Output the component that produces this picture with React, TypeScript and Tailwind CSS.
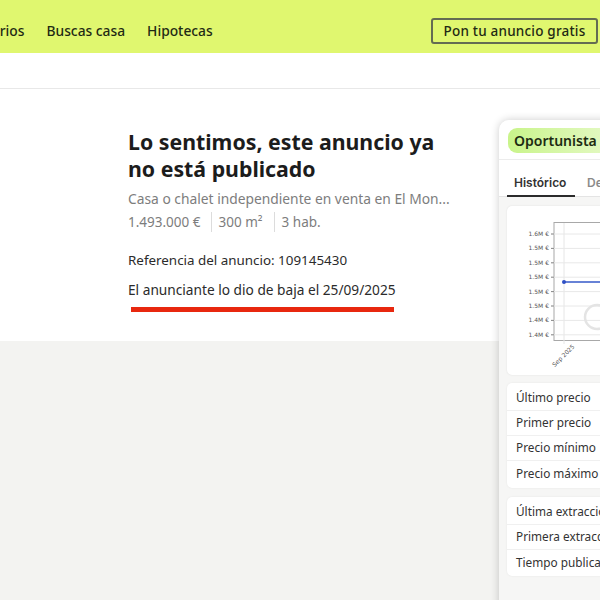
const ticks = ["1.6M €", "1.5M €", "1.5M €", "1.5M €", "1.5M €", "1.5M €", "1.4M €", "1.4M €"];

const PriceChart = () => (
  <svg width="93" height="169" viewBox="507 206 93 169" className="block">
    <rect x="554" y="222.5" width="60" height="118" fill="none" stroke="#a8a8a8" strokeWidth="1" />
    <line x1="564" y1="223" x2="564" y2="344" stroke="#e6e6e6" strokeWidth="1" />
    {ticks.map((t, i) => {
      const y = 234 + i * 14.4;
      return (
        <g key={i}>
          <line x1="551" y1={y} x2="600" y2={y} stroke="#e8e8e8" strokeWidth="1" />
          <line x1="551" y1={y} x2="554" y2={y} stroke="#888" strokeWidth="1" />
          <text x="549" y={y + 2} textAnchor="end" fontSize="6" fill="#555" fontFamily="'DejaVu Sans', sans-serif">
            {t}
          </text>
        </g>
      );
    })}
    <circle cx="597" cy="317" r="12" fill="none" stroke="#e4e4e4" strokeWidth="2.5" />
    <line x1="564" y1="282" x2="600" y2="282" stroke="#3558c8" strokeWidth="1.5" />
    <circle cx="564" cy="282" r="2" fill="#2f4fc4" />
    <text
      x="575"
      y="347"
      textAnchor="end"
      fontSize="6"
      fill="#555"
      fontFamily="'DejaVu Sans', sans-serif"
      transform="rotate(-45 575 347)"
    >
      Sep 2025
    </text>
  </svg>
);

const Row = ({ label, last }: { label: string; last?: boolean }) => (
  <div className={`h-[25px] pl-[9px] flex items-center text-[11.8px] text-[#333] whitespace-nowrap ${last ? "" : "border-b border-[#f0f0f0]"}`}>
    {label}
  </div>
);

const App = () => {
  return (
    <div className="relative w-[600px] h-[600px] overflow-hidden bg-[#f3f3f1] font-['Noto_Sans',sans-serif]">
      <header className="h-[53px] pt-[9px] bg-[#e0f76f] flex items-center text-[#1f2a14] font-medium">
        <nav className="flex gap-[22px] ml-[-56px] text-[13.8px]">
          <span>Propietarios</span>
          <span>Buscas casa</span>
          <span>Hipotecas</span>
        </nav>
        <button className="absolute left-[431px] top-[18px] w-[167px] h-[26px] border-2 border-[#646c52] rounded-[3px] text-[13.5px] tracking-[0.2px] text-center">
          Pon tu anuncio gratis
        </button>
      </header>
      <div className="h-[36px] bg-white border-b border-[#e8e8e8]"></div>
      <main className="h-[252px] bg-white pl-[128px] pt-[39px]">
        <h1 className="w-[330px] text-[21.3px] leading-[27px] font-bold text-[#1c1c1c]">
          Lo sentimos, este anuncio ya no está publicado
        </h1>
        <p className="mt-[7px] text-[13.8px] leading-[20px] text-[#7d7d7d] whitespace-nowrap">
          Casa o chalet independiente en venta en El Mon...
        </p>
        <div className="mt-[3px] flex items-center text-[13.5px] leading-[20px] text-[#7d7d7d]">
          <span className="pr-[10px] border-r border-[#dcdcdc]">1.493.000 €</span>
          <span className="pl-[7px] pr-[11px] border-r border-[#dcdcdc]">300 m²</span>
          <span className="pl-[7px]">3 hab.</span>
        </div>
        <p className="mt-[18px] text-[13.4px] leading-[20px] text-[#2b2b2b]">Referencia del anuncio: 109145430</p>
        <p className="mt-[10px] text-[13.7px] leading-[20px] text-[#2b2b2b]">El anunciante lo dio de baja el 25/09/2025</p>
        <div className="mt-[7px] ml-[3px] w-[263px] h-[5px] bg-[#e8280f]"></div>
      </main>

      {/* panel de la extension, flota sobre la pagina */}
      <aside className="absolute left-[499px] top-[120px] w-[200px] h-[520px] bg-[#f6f6f5] rounded-tl-[10px] shadow-[0_0_8px_rgba(0,0,0,0.2)] overflow-hidden">
        <div className="h-[40px] pt-[1px] bg-white flex items-center pl-[9px] border-b border-[#ececec]">
          <span className="h-[25px] pl-[6px] pr-[14px] flex items-center rounded-l-[9px] bg-gradient-to-r from-[#c9f48a] to-[#e4f9c4] text-[14px] font-semibold text-[#1d2b12]">
            Oportunista
          </span>
        </div>
        <div className="h-[37px] bg-white flex border-b border-[#e4e4e4] text-[12px] font-semibold font-['Inter',sans-serif]">
          <span className="ml-[8px] w-[68px] pl-[7px] pt-[16px] leading-[14px] h-[37px] border-b-2 border-[#2b2b2b] text-[#333]">Histórico</span>
          <span className="ml-[12px] pt-[16px] leading-[14px] text-[#8a8a8a]">Detalles</span>
        </div>
        <div className="pl-[8px]">
          <div className="mt-[9px] h-[169px] bg-white rounded-l-[5px] shadow-[0_0_2px_rgba(0,0,0,0.1)]">
            <PriceChart />
          </div>
          <div className="mt-[8px] h-[105px] bg-white rounded-l-[5px] pt-[3px] shadow-[0_0_2px_rgba(0,0,0,0.08)]">
            <Row label="Último precio" />
            <Row label="Primer precio" />
            <Row label="Precio mínimo" />
            <Row label="Precio máximo" last />
          </div>
          <div className="mt-[9px] h-[79px] bg-white rounded-l-[5px] pt-[3px] shadow-[0_0_2px_rgba(0,0,0,0.08)]">
            <Row label="Última extracción" />
            <Row label="Primera extracción" />
            <Row label="Tiempo publicado" last />
          </div>
        </div>
      </aside>
    </div>
  );
};

export default App;
